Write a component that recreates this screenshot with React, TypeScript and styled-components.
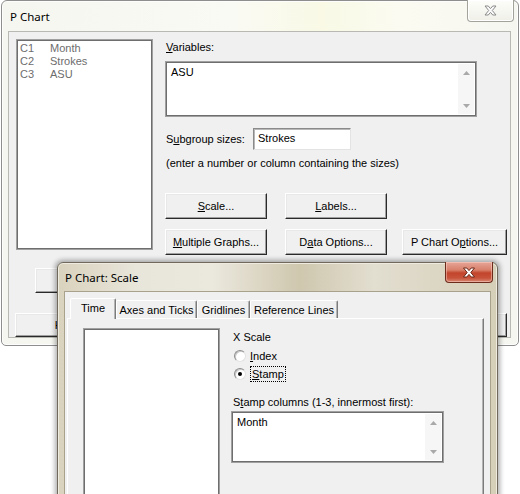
import React from "react";
import styled, { createGlobalStyle } from "styled-components";

const Global = createGlobalStyle`
  html, body { margin: 0; padding: 0; background: #fff; }
  body {
    width: 520px; height: 494px; overflow: hidden;
    font-family: "Liberation Sans", Arial, sans-serif;
    font-size: 11px; color: #000;
  }
`;

const Desktop = styled.div`
  position: relative;
  width: 520px;
  height: 494px;
  overflow: hidden;
  background: #fff;
`;

type Variant = "main" | "child";

const Window = styled.div<{ $left: number; $top: number; $w: number; $h: number; $variant: Variant }>`
  position: absolute;
  left: ${(p) => p.$left}px;
  top: ${(p) => p.$top}px;
  width: ${(p) => p.$w}px;
  height: ${(p) => p.$h}px;
  box-sizing: border-box;
  display: flex;
  flex-direction: column;
  border: 1px solid ${(p) => (p.$variant === "main" ? "#8e8e8e" : "#6f6a5c")};
  border-radius: 6px 6px 5px 5px;
  padding: 0 ${(p) => (p.$variant === "main" ? 7 : 6)}px 7px 6px;
  background: ${(p) =>
    p.$variant === "main"
      ? "linear-gradient(90deg, #f6f6f1 0%, #fafaf4 45%, #f9f9e6 62%, #fbfbf2 78%, #f6f6f1 100%)"
      : "linear-gradient(90deg, #d9d2bd 0%, #e8e5da 18%, #ebe8de 35%, #cfc7ae 55%, #e2ded0 72%, #d6cfb8 100%)"};
  box-shadow: ${(p) =>
    p.$variant === "main"
      ? "inset 0 0 0 1px #fdfdfb"
      : "inset 0 0 0 1px #efebe0, 0 0 5px 2px rgba(0,0,0,0.32)"};
`;

const TitleBar = styled.div<{ $h: number; $pl: number }>`
  height: ${(p) => p.$h}px;
  flex: none;
  display: flex;
  align-items: center;
  padding-left: ${(p) => p.$pl}px;
  font-family: "Noto Sans", "Open Sans", sans-serif;
  font-size: 11.5px;
  color: #000;
`;

const CloseButton = styled.div<{ $red?: boolean; $w: number; $h: number }>`
  position: absolute;
  top: -1px;
  right: 4px;
  width: ${(p) => p.$w}px;
  height: ${(p) => p.$h}px;
  box-sizing: border-box;
  display: flex;
  align-items: center;
  justify-content: center;
  border: 1px solid ${(p) => (p.$red ? "#6d2b1c" : "#a3a39c")};
  border-top: none;
  border-radius: 0 0 4px 4px;
  background: ${(p) =>
    p.$red
      ? "linear-gradient(180deg, #e7a597 0%, #d8806b 40%, #c2442b 55%, #c8533a 80%, #d98a74 100%)"
      : "linear-gradient(180deg, #fdfdfa 0%, #f7f7f1 50%, #efefe8 100%)"};
  box-shadow: ${(p) => (p.$red ? "inset 0 0 0 1px rgba(255,220,210,0.45)" : "inset 0 0 0 1px #ffffff")};
`;

const Client = styled.div<{ $variant: Variant }>`
  flex: 1;
  min-height: 0;
  display: flex;
  flex-direction: column;
  background: #f0f0f0;
  border: 1px solid ${(p) => (p.$variant === "main" ? "#b9b9b4" : "#a8a18c")};
  overflow: hidden;
`;

const MainBody = styled.div`
  display: flex;
  flex-direction: column;
  padding: 7px 0 0 7px;
`;

const TopRow = styled.div`
  display: flex;
  gap: 12px;
`;

const ListBox = styled.div<{ $h: number }>`
  width: 137px;
  height: ${(p) => p.$h}px;
  flex: none;
  box-sizing: border-box;
  background: #fff;
  border: 1px solid #a0a0a0;
  box-shadow: inset 0 0 0 1px #6e6e6e;
  padding: 2px 0 0 3px;
`;

const ListRow = styled.div`
  display: flex;
  height: 13px;
  line-height: 13px;
  color: #6d6d6d;
`;

const ListCol = styled.span`
  width: 30px;
  flex: none;
`;

const RightCol = styled.div`
  display: flex;
  flex-direction: column;
  width: 345px;
`;

const Label = styled.div<{ $mt?: number; $ml?: number }>`
  height: 16px;
  line-height: 16px;
  margin-top: ${(p) => p.$mt ?? 0}px;
  margin-left: ${(p) => p.$ml ?? 1}px;
  white-space: nowrap;
`;

const Key = styled.span`
  text-decoration: underline;
  text-underline-offset: 1px;
`;

const MemoBox = styled.div<{ $w: number; $h: number; $mt: number; $ml?: number }>`
  width: ${(p) => p.$w}px;
  height: ${(p) => p.$h}px;
  margin-top: ${(p) => p.$mt}px;
  margin-left: ${(p) => p.$ml ?? 0}px;
  box-sizing: border-box;
  display: flex;
  background: #fff;
  border: 1px solid #a0a0a0;
  box-shadow: inset 0 0 0 1px #6e6e6e;
`;

const MemoText = styled.div`
  flex: 1;
  padding: 4px 0 0 5px;
  line-height: 13px;
`;

const ScrollCol = styled.div`
  width: 16px;
  flex: none;
  margin: 2px 2px 2px 0;
  background: #f6f6f6;
  display: flex;
  flex-direction: column;
  justify-content: space-between;
  align-items: center;
  padding: 7px 0 6px;
  box-sizing: border-box;
`;

const Arrow = ({ down }: { down?: boolean }) => (
  <svg width="7" height="4" viewBox="0 0 7 4">
    <path d={down ? "M0 0 L7 0 L3.5 4 Z" : "M0 4 L7 4 L3.5 0 Z"} fill="#a9a9a9" />
  </svg>
);

const FieldRow = styled.div<{ $mt: number }>`
  display: flex;
  align-items: center;
  margin-top: ${(p) => p.$mt}px;
`;

const FieldLabel = styled.span`
  width: 87px;
  margin-left: 1px;
  flex: none;
`;

const TextField = styled.div`
  width: 98px;
  height: 22px;
  box-sizing: border-box;
  background: #fff;
  border: 1px solid;
  border-color: #8a8a8a #e3e3e3 #e3e3e3 #8a8a8a;
  box-shadow: inset 1px 1px #b8b8b8;
  padding-left: 4px;
  line-height: 19px;
`;

const ButtonRow = styled.div<{ $mt: number; $ml?: number }>`
  display: flex;
  margin-top: ${(p) => p.$mt}px;
  margin-left: ${(p) => p.$ml ?? 0}px;
`;

const Button = styled.div<{ $w: number; $h?: number; $ml?: number }>`
  width: ${(p) => p.$w}px;
  height: ${(p) => p.$h ?? 26}px;
  margin-left: ${(p) => p.$ml ?? 0}px;
  flex: none;
  box-sizing: border-box;
  display: flex;
  align-items: center;
  justify-content: center;
  background: #f0f0f0;
  border: 1px solid;
  border-color: #ffffff #2a2a2a #2a2a2a #ffffff;
  box-shadow: inset -1px -1px #a0a0a0, inset 1px 1px #e8e8e8;
  white-space: nowrap;
  color: #000;
`;

const Spacer = styled.div`
  flex: 1;
`;

const EdgeGap = styled.div`
  flex: none;
  width: 3px;
`;

/* ---- Scale dialog ---- */

const TabStrip = styled.div`
  display: flex;
  align-items: flex-end;
  height: 20px;
  margin-top: 6px;
  padding-left: 5px;
`;

const Tab = styled.div<{ $w: number; $active?: boolean }>`
  position: relative;
  z-index: ${(p) => (p.$active ? 2 : 1)};
  width: ${(p) => p.$w}px;
  height: ${(p) => (p.$active ? 21 : 18)}px;
  margin-bottom: ${(p) => (p.$active ? -1 : 0)}px;
  box-sizing: border-box;
  display: flex;
  align-items: center;
  justify-content: center;
  padding-bottom: ${(p) => (p.$active ? 2 : 0)}px;
  background: #f0f0f0;
  border: 1px solid;
  border-bottom: none;
  border-color: #ffffff #7b7b7b transparent #ffffff;
  border-radius: 2px 2px 0 0;
  box-shadow: inset -1px 0 #b4b4b4;
  white-space: nowrap;
`;

const TabPanel = styled.div`
  flex: 1;
  margin: 0 6px 0 2px;
  display: flex;
  gap: 12px;
  box-sizing: border-box;
  padding: 9px 0 0 15px;
  border: 1px solid;
  border-bottom: none;
  border-color: #ffffff #7b7b7b transparent #ffffff;
  box-shadow: inset -1px 0 #b4b4b4;
`;

const ScaleList = styled(ListBox)`
  height: auto;
  flex: none;
  align-self: stretch;
  border-bottom: none;
`;

const OptionsCol = styled.div`
  display: flex;
  flex-direction: column;
  padding-top: 1px;
`;

const RadioRow = styled.div<{ $mt: number }>`
  display: flex;
  align-items: center;
  height: 18px;
  margin-top: ${(p) => p.$mt}px;
  margin-left: 2px;
  gap: 4px;
`;

const Radio = styled.span<{ $on?: boolean }>`
  position: relative;
  width: 12px;
  height: 12px;
  box-sizing: border-box;
  border-radius: 50%;
  border: 1px solid;
  border-color: #8c8c8c #e2e2e2 #e2e2e2 #8c8c8c;
  background: #fff;
  box-shadow: inset 1px 1px #c8c8c8;
  &::after {
    content: "";
    display: ${(p) => (p.$on ? "block" : "none")};
    position: absolute;
    left: 3px;
    top: 3px;
    width: 4px;
    height: 4px;
    border-radius: 50%;
    background: #000;
  }
`;

const FocusText = styled.span`
  border: 1px dotted #000;
  padding: 0 1px;
  line-height: 14px;
`;

const XGlyph = ({ red }: { red?: boolean }) => (
  <svg width={red ? 14 : 13} height={11} viewBox="0 0 13 11">
    <path
      d="M1 1 L4.3 1 L6.5 3.6 L8.7 1 L12 1 L8.3 5.5 L12 10 L8.7 10 L6.5 7.4 L4.3 10 L1 10 L4.7 5.5 Z"
      fill={red ? "#ffffff" : "#fbfbfb"}
      stroke={red ? "#6a2414" : "#8a8a8a"}
      strokeWidth="1"
      strokeLinejoin="round"
    />
  </svg>
);

export default function App() {
  return (
    <>
      <Global />
      <Desktop>
        <Window $left={1} $top={0} $w={518} $h={346} $variant="main">
          <TitleBar $h={30} $pl={2}>P Chart</TitleBar>
          <CloseButton $w={47} $h={22}>
            <XGlyph />
          </CloseButton>
          <Client $variant="main">
            <MainBody>
              <TopRow>
                <ListBox $h={211}>
                  <ListRow><ListCol>C1</ListCol>Month</ListRow>
                  <ListRow><ListCol>C2</ListCol>Strokes</ListRow>
                  <ListRow><ListCol>C3</ListCol>ASU</ListRow>
                </ListBox>
                <RightCol>
                  <Label>
                    <Key>V</Key>ariables:
                  </Label>
                  <MemoBox $w={312} $h={56} $mt={6}>
                    <MemoText>ASU</MemoText>
                    <ScrollCol>
                      <Arrow />
                      <Arrow down />
                    </ScrollCol>
                  </MemoBox>
                  <FieldRow $mt={11}>
                    <FieldLabel>
                      S<Key>u</Key>bgroup sizes:
                    </FieldLabel>
                    <TextField>Strokes</TextField>
                  </FieldRow>
                  <Label $mt={5}>(enter a number or column containing the sizes)</Label>
                  <ButtonRow $mt={22}>
                    <Button $w={102}>
                      <span><Key>S</Key>cale...</span>
                    </Button>
                    <Button $w={102} $ml={18}>
                      <span><Key>L</Key>abels...</span>
                    </Button>
                  </ButtonRow>
                  <ButtonRow $mt={10}>
                    <Button $w={102}>
                      <span><Key>M</Key>ultiple Graphs...</span>
                    </Button>
                    <Button $w={102} $ml={18}>
                      <span>D<Key>a</Key>ta Options...</span>
                    </Button>
                    <Button $w={105} $ml={15}>
                      <span>P Chart O<Key>p</Key>tions...</span>
                    </Button>
                  </ButtonRow>
                </RightCol>
              </TopRow>
              <ButtonRow $mt={13} $ml={19}>
                <Button $w={100} $h={25} />
              </ButtonRow>
              <ButtonRow $mt={20} $ml={-1}>
                <Button $w={102} $h={24}>Help</Button>
                <Spacer />
                <Button $w={90} $h={24} />
                <Button $w={90} $h={24} $ml={8} />
                <EdgeGap />
              </ButtonRow>
            </MainBody>
          </Client>
        </Window>

        <Window $left={57} $top={262} $w={441} $h={300} $variant="child">
          <TitleBar $h={28} $pl={1}>P Chart: Scale</TitleBar>
          <CloseButton $red $w={48} $h={21}>
            <XGlyph red />
          </CloseButton>
          <Client $variant="child">
            <TabStrip>
              <Tab $w={46} $active>Time</Tab>
              <Tab $w={81}>Axes and Ticks</Tab>
              <Tab $w={53}>Gridlines</Tab>
              <Tab $w={88}>Reference Lines</Tab>
            </TabStrip>
            <TabPanel>
              <ScaleList $h={0} />
              <OptionsCol>
                <Label>X Scale</Label>
                <RadioRow $mt={2}>
                  <Radio />
                  <span><Key>I</Key>ndex</span>
                </RadioRow>
                <RadioRow $mt={0}>
                  <Radio $on />
                  <FocusText><Key>S</Key>tamp</FocusText>
                </RadioRow>
                <Label $mt={11}>
                  S<Key>t</Key>amp columns (1-3, innermost first):
                </Label>
                <MemoBox $w={213} $h={52} $mt={1} $ml={-1}>
                  <MemoText>Month</MemoText>
                  <ScrollCol>
                    <Arrow />
                    <Arrow down />
                  </ScrollCol>
                </MemoBox>
              </OptionsCol>
            </TabPanel>
          </Client>
        </Window>
      </Desktop>
    </>
  );
}
